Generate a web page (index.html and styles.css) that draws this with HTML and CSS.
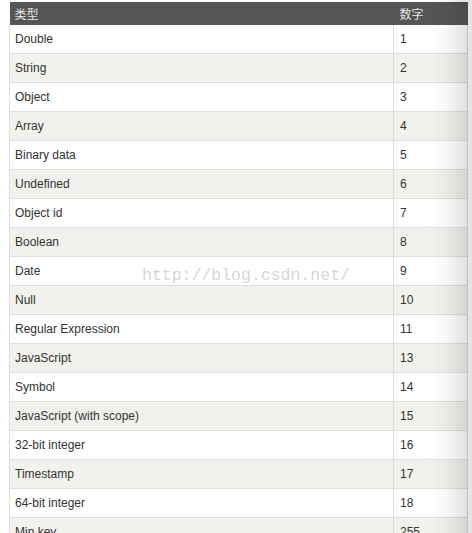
FILE: index.html
```html
<!DOCTYPE html>
<html>
<head>
<meta charset="utf-8">
<link rel="stylesheet" href="styles.css">
</head>
<body>
<div class="page">
  <table class="types">
    <thead>
      <tr><th class="c1">类型</th><th class="c2">数字</th></tr>
    </thead>
    <tbody>
      <tr><td class="c1">Double</td><td class="c2">1</td></tr>
      <tr><td class="c1">String</td><td class="c2">2</td></tr>
      <tr><td class="c1">Object</td><td class="c2">3</td></tr>
      <tr><td class="c1">Array</td><td class="c2">4</td></tr>
      <tr><td class="c1">Binary data</td><td class="c2">5</td></tr>
      <tr><td class="c1">Undefined</td><td class="c2">6</td></tr>
      <tr><td class="c1">Object id</td><td class="c2">7</td></tr>
      <tr><td class="c1">Boolean</td><td class="c2">8</td></tr>
      <tr><td class="c1">Date</td><td class="c2">9</td></tr>
      <tr><td class="c1">Null</td><td class="c2">10</td></tr>
      <tr><td class="c1">Regular Expression</td><td class="c2">11</td></tr>
      <tr><td class="c1">JavaScript</td><td class="c2">13</td></tr>
      <tr><td class="c1">Symbol</td><td class="c2">14</td></tr>
      <tr><td class="c1">JavaScript (with scope)</td><td class="c2">15</td></tr>
      <tr><td class="c1">32-bit integer</td><td class="c2">16</td></tr>
      <tr><td class="c1">Timestamp</td><td class="c2">17</td></tr>
      <tr><td class="c1">64-bit integer</td><td class="c2">18</td></tr>
      <tr><td class="c1">Min key</td><td class="c2">255</td></tr>
    </tbody>
  </table>
  <div class="shade"></div>
  <div class="watermark">http://blog.csdn.net/</div>
</div>
</body>
</html>
```
FILE: styles.css
```css
html, body {
  margin: 0;
  padding: 0;
  background: #ffffff;
  overflow: hidden;
}
.page {
  position: relative;
  width: 472px;
  height: 533px;
  padding: 2px 0 0 9px;
  box-sizing: border-box;
  font-family: "Helvetica Neue", "Liberation Sans", Arial, "Noto Sans CJK SC", sans-serif;
  font-size: 12px;
  color: #333333;
}
.types {
  border-collapse: collapse;
  width: 459px;
  table-layout: fixed;
}
.types th {
  background: #555555;
  color: #e6e6e6;
  font-weight: normal;
  text-align: left;
  height: 23px;
  padding: 0 0 0 5px;
  font-family: "Noto Sans CJK SC", sans-serif;
  font-size: 12px;
  line-height: 22px;
  vertical-align: middle;
}
.types th.c1 { width: 379px; padding-left: 5px; }
.types th.c2 { padding-left: 6px; }
.types td {
  height: 28px;
  padding: 0 0 0 5px;
  border: 1px solid #dddddd;
  border-top: none;
  vertical-align: middle;
  line-height: 28px;
}
.types td.c2 { padding-left: 6px; }
.types tbody tr:nth-child(odd) td { background: #ffffff; }
.types tbody tr:nth-child(even) td { background: #f2f1ed; }
.shade {
  position: absolute;
  top: 0;
  right: 0;
  width: 42px;
  height: 533px;
  background: linear-gradient(to right, rgba(0,0,0,0) 0%, rgba(0,0,0,0.03) 40%, rgba(0,0,0,0.12) 90%, rgba(0,0,0,0.14) 100%);
  pointer-events: none;
}
.shade::after {
  content: "";
  position: absolute;
  top: 0;
  right: 0;
  width: 4px;
  height: 100%;
  background: #e4e4e2;
}
.watermark {
  position: absolute;
  left: 142px;
  top: 266px;
  font-family: "Liberation Mono", "DejaVu Sans Mono", monospace;
  font-size: 16.5px;
  color: rgba(170, 170, 170, 0.5);
  pointer-events: none;
}
```
